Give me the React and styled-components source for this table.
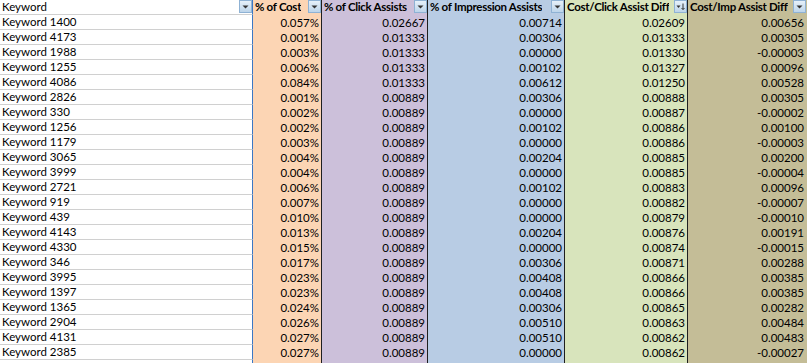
import React from 'react';
import styled, { createGlobalStyle } from 'styled-components';

const GlobalStyle = createGlobalStyle`
  html, body {
    margin: 0;
    padding: 0;
    background: #ffffff;
    overflow: hidden;
  }
  body {
    font-family: Lato, "Liberation Sans", sans-serif;
  }
`;

const columns = [
    { key: 'cost', title: '% of Cost', bg: '#fcd5b4', width: 69, line: '#1f1f1f' },
    { key: 'click', title: '% of Click Assists', bg: '#ccc0da', width: 106, line: '#1f1f1f' },
    { key: 'imp', title: '% of Impression Assists', bg: '#b8cce4', width: 137, line: '#1f1f1f' },
    { key: 'cc', title: 'Cost/Click Assist Diff', bg: '#d8e4bc', width: 123, line: '#1f1f1f', sorted: true },
    { key: 'ci', title: 'Cost/Imp Assist Diff', bg: '#c4bd97', width: 119, line: 'transparent' },
];

const rows = [
    ['1400', '0.057%', '0.02667', '0.00714', '0.02609', '0.00656'],
    ['4173', '0.001%', '0.01333', '0.00306', '0.01333', '0.00305'],
    ['1988', '0.003%', '0.01333', '0.00000', '0.01330', '-0.00003'],
    ['1255', '0.006%', '0.01333', '0.00102', '0.01327', '0.00096'],
    ['4086', '0.084%', '0.01333', '0.00612', '0.01250', '0.00528'],
    ['2826', '0.001%', '0.00889', '0.00306', '0.00888', '0.00305'],
    ['330', '0.002%', '0.00889', '0.00000', '0.00887', '-0.00002'],
    ['1256', '0.002%', '0.00889', '0.00102', '0.00886', '0.00100'],
    ['1179', '0.003%', '0.00889', '0.00000', '0.00886', '-0.00003'],
    ['3065', '0.004%', '0.00889', '0.00204', '0.00885', '0.00200'],
    ['3999', '0.004%', '0.00889', '0.00000', '0.00885', '-0.00004'],
    ['2721', '0.006%', '0.00889', '0.00102', '0.00883', '0.00096'],
    ['919', '0.007%', '0.00889', '0.00000', '0.00882', '-0.00007'],
    ['439', '0.010%', '0.00889', '0.00000', '0.00879', '-0.00010'],
    ['4143', '0.013%', '0.00889', '0.00204', '0.00876', '0.00191'],
    ['4330', '0.015%', '0.00889', '0.00000', '0.00874', '-0.00015'],
    ['346', '0.017%', '0.00889', '0.00306', '0.00871', '0.00288'],
    ['3995', '0.023%', '0.00889', '0.00408', '0.00866', '0.00385'],
    ['1397', '0.023%', '0.00889', '0.00408', '0.00866', '0.00385'],
    ['1365', '0.024%', '0.00889', '0.00306', '0.00865', '0.00282'],
    ['2904', '0.026%', '0.00889', '0.00510', '0.00863', '0.00484'],
    ['4131', '0.027%', '0.00889', '0.00510', '0.00862', '0.00483'],
    ['2385', '0.027%', '0.00889', '0.00000', '0.00862', '-0.00027'],
];

const DropIcon = ({ sorted }) => (
    <FilterBtn>
        {sorted ? (
            <svg width="11" height="9" viewBox="0 0 11 9">
                <path d="M1.5 3.5 L5.5 3.5 L3.5 6 Z" fill="#333" />
                <path d="M8 1.5 L8 7.5 M6.5 6 L8 7.5 L9.5 6" stroke="#333" strokeWidth="1" fill="none" />
            </svg>
        ) : (
            <svg width="9" height="6" viewBox="0 0 9 6">
                <path d="M1.5 1.5 L7.5 1.5 L4.5 4.5 Z" fill="#333" />
            </svg>
        )}
    </FilterBtn>
);

const App = () => {
    return (
        <Sheet>
            <GlobalStyle />
            <Row>
                <KeyHead>
                    <HeadText>Keyword</HeadText>
                    <DropIcon />
                </KeyHead>
                {columns.map((c) => (
                    <ColHead key={c.key} bg={c.bg} w={c.width} line={c.line}>
                        <HeadText bold>{c.title}</HeadText>
                        <DropIcon sorted={c.sorted} />
                    </ColHead>
                ))}
            </Row>
            {rows.map((r) => (
                <Row key={r[0]}>
                    <KeyCell>Keyword {r[0]}</KeyCell>
                    {columns.map((c, i) => (
                        <ValCell key={c.key} bg={c.bg} w={c.width} line={c.line}>
                            {r[i + 1]}
                        </ValCell>
                    ))}
                </Row>
            ))}
            <Row>
                <KeyCell />
                {columns.map((c) => (
                    <ValCell key={c.key} bg={c.bg} w={c.width} line={c.line} />
                ))}
            </Row>
        </Sheet>
    );
};

const Sheet = styled.div`
    width: 807px;
    height: 363px;
    overflow: hidden;
    color: #000;
    font-size: 11.5px;
`

const Row = styled.div`
    display: flex;
    height: 15px;
`

const KeyHead = styled.div`
    width: 253px;
    height: 15px;
    box-sizing: border-box;
    display: flex;
    align-items: flex-start;
    justify-content: space-between;
    border-bottom: 1px solid #d0d0d0;
    border-right: 1px solid #3b78c4;
`

const ColHead = styled.div`
    width: ${(p) => p.w}px;
    height: 15px;
    box-sizing: border-box;
    display: flex;
    align-items: flex-start;
    justify-content: space-between;
    background: ${(p) => p.bg};
    border-right: 1px solid ${(p) => p.line};
    overflow: hidden;
`

const HeadText = styled.span`
    font-weight: ${(p) => (p.bold ? 700 : 400)};
    letter-spacing: ${(p) => (p.bold ? '-0.3px' : '0')};
    line-height: 14px;
    padding-left: 2px;
    white-space: nowrap;
    overflow: hidden;
`

const FilterBtn = styled.span`
    width: 13px;
    height: 13px;
    box-sizing: border-box;
    display: flex;
    align-items: center;
    justify-content: center;
    flex-shrink: 0;
    border: 1px solid #8fb2d4;
    background: linear-gradient(#e6f0f9, #bdd5ea);
`

const KeyCell = styled.div`
    width: 253px;
    height: 15px;
    box-sizing: border-box;
    line-height: 14px;
    padding-left: 2px;
    border-bottom: 1px solid #d0d0d0;
    border-right: 1px solid #3b78c4;
    white-space: nowrap;
`

const ValCell = styled.div`
    width: ${(p) => p.w}px;
    height: 15px;
    line-height: 15px;
    box-sizing: border-box;
    padding-right: 2px;
    text-align: right;
    background: ${(p) => p.bg};
    border-right: 1px solid ${(p) => p.line};
    white-space: nowrap;
`

export default App;
